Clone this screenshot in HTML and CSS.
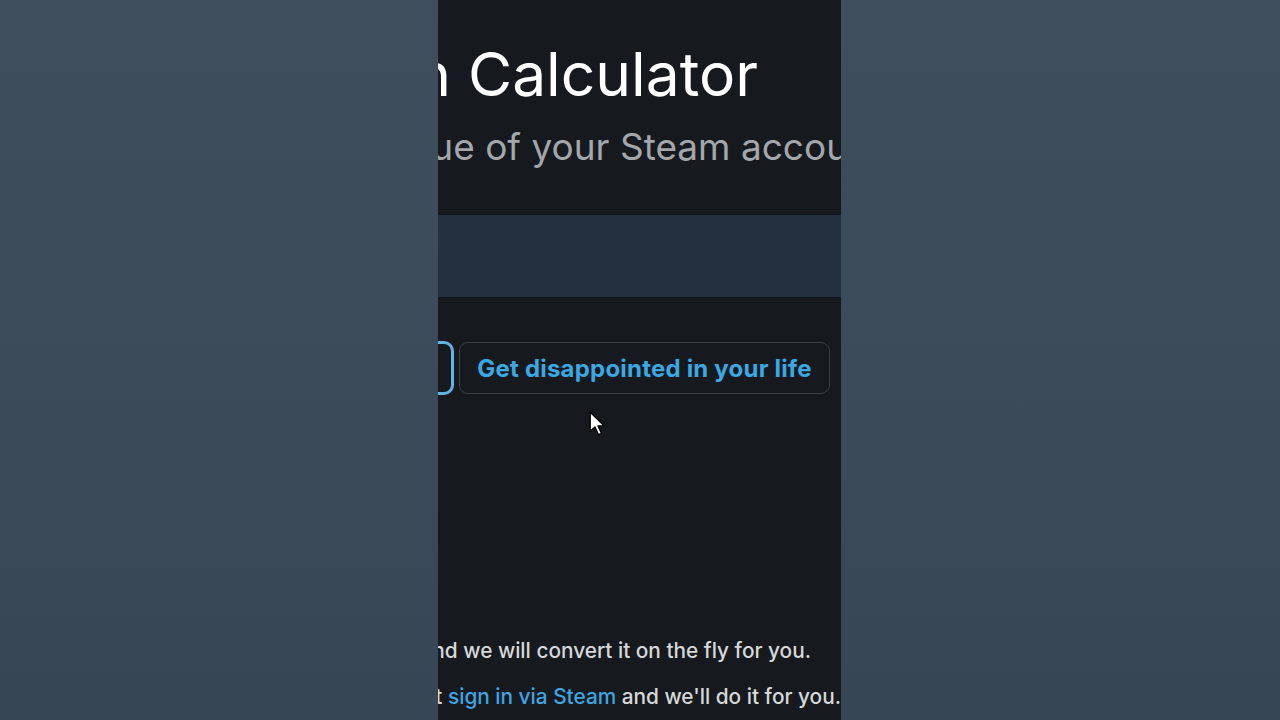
FILE: index.html
```html
<!DOCTYPE html>
<html lang="en">
<head>
    <meta charset="UTF-8">
    <meta name="viewport" content="width=device-width, initial-scale=1.0">
    <title>Steam Account Value Calculator</title>
    <link rel="stylesheet" href="styles.css">
</head>
<body>
    <div class="backdrop backdrop-left"></div>

    <main class="frame">
        <h1 class="title"><span>Steam Account Valuation Calculator</span></h1>
        <p class="subtitle"><span>Find out the value of your Steam account</span></p>

        <div class="band"></div>

        <div class="actions">
            <button class="btn btn-primary">Calculate</button>
            <button class="btn btn-ghost">Get disappointed in your life</button>
        </div>

        <div class="notes">
            <p class="note note-1"><span>Paste your value in any currency and we will convert it on the fly for you.</span></p>
            <p class="note note-2"><span>Or just <a href="#">sign in via Steam</a> and we'll do it for you.</span></p>
        </div>

        <!-- mouse pointer -->
        <svg class="pointer" width="19" height="26" viewBox="0 0 16 22">
            <path d="M1 1 L1 17 L5 13.5 L8 20 L10.5 19 L7.6 12.6 L12.5 12.4 Z" fill="#fff" stroke="#000" stroke-width="1.1" stroke-linejoin="round"/>
        </svg>
    </main>

    <div class="backdrop"></div>
</body>
</html>
```

FILE: styles.css
```css
html, body { margin: 0; height: 100%; }
body { display: flex; background: #3a4958; font-family: Inter, "Noto Sans", sans-serif; overflow: hidden; }

.backdrop { flex: 1; background: linear-gradient(180deg, #3e4e5d 0%, #3b4b5a 50%, #374654 100%); }
.backdrop-left { flex: none; width: 438px; }

.frame { position: relative; width: 403px; flex: none; background: #16191e; overflow: hidden; }

/* rows pushed against the right edge, overflowing to the left */
.title, .subtitle, .note { display: flex; justify-content: flex-end; white-space: nowrap; margin: 0; }

.title { font-size: 60.5px; font-weight: 400; color: #fff; line-height: 70px; margin-top: 39px; padding-right: 83px; }
.subtitle { font-size: 37px; color: #a3a7ac; line-height: 44px; margin-top: 16px; margin-right: -41px; }

.band { height: 82px; background: #223040; margin-top: 46px; }

.actions { display: flex; justify-content: flex-end; gap: 5px; margin-top: 45px; padding-right: 11px; }
.btn { flex: none; font-family: inherit; font-size: 24px; font-weight: 700; border-radius: 9px; background: transparent; white-space: nowrap; height: 54px; }
.btn-primary { border: 3px solid #62b2e6; border-radius: 10px; color: #62b2e6; padding: 0 26px; margin-top: -1px; }
.btn-ghost { border: 1px solid #3b4049; color: #3aa8e2; width: 371px; height: 52px; padding: 0; letter-spacing: 0.2px; }

.notes { margin-top: 244px; }
.note { font-size: 20.8px; font-weight: 500; color: #d6d8da; line-height: 24px; }
.note-1 { padding-right: 30px; }
.note-2 { margin-top: 22px; }
.note a { color: #3ea6e0; text-decoration: none; }

.pointer { position: absolute; left: 151px; top: 411px; }
```
